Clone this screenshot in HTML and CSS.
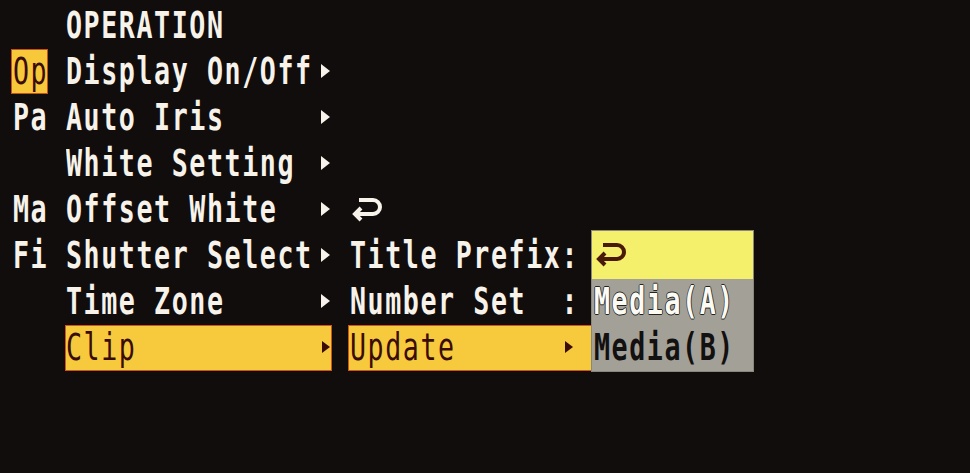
FILE: index.html
```html
<!DOCTYPE html>
<html lang="en">
<head>
  <meta charset="UTF-8" />
  <title>Operation Menu</title>
  <link rel="stylesheet" href="styles.css">
</head>
<body>
  <div class="menu">
    <div class="title"><span class="label">OPERATION</span></div>

    <div class="tab row2"><div class="tab-box active"><span class="label">Op</span></div></div>
    <div class="tab row3"><div class="tab-box"><span class="label">Pa</span></div></div>
    <div class="tab row5"><div class="tab-box"><span class="label">Ma</span></div></div>
    <div class="tab row6"><div class="tab-box"><span class="label">Fi</span></div></div>

    <div class="item row2"><span class="label">Display On/Off</span><i class="arrow"></i></div>
    <div class="item row3"><span class="label">Auto Iris</span><i class="arrow"></i></div>
    <div class="item row4"><span class="label">White Setting</span><i class="arrow"></i></div>
    <div class="item row5"><span class="label">Offset White</span><i class="arrow"></i></div>
    <div class="item row6"><span class="label">Shutter Select</span><i class="arrow"></i></div>
    <div class="item row7"><span class="label">Time Zone</span><i class="arrow"></i></div>
    <div class="item row8 selected"><span class="label">Clip</span><i class="arrow"></i></div>

    <div class="sub row5">
      <svg class="back" width="34" height="26" viewBox="0 0 34 26">
        <path d="M9 4 H23 A7 7 0 0 1 23 18 H5 M11 12 L5 18 L11 24" fill="none" stroke="currentColor" stroke-width="4"/>
      </svg>
    </div>
    <div class="sub row6"><span class="label">Title Prefix:</span></div>
    <div class="sub row7"><span class="label">Number Set  :</span></div>
    <div class="sub row8 selected"><span class="label">Update</span><i class="arrow"></i></div>

    <div class="dropdown">
      <div class="option current">
        <svg class="back" width="34" height="26" viewBox="0 0 34 26">
          <path d="M9 4 H23 A7 7 0 0 1 23 18 H5 M11 12 L5 18 L11 24" fill="none" stroke="currentColor" stroke-width="4"/>
        </svg>
      </div>
      <div class="option light"><span class="label">Media(A)</span></div>
      <div class="option dark"><span class="label">Media(B)</span></div>
    </div>
  </div>
</body>
</html>
```

FILE: styles.css
```css
body {
  margin: 0;
  background: #110d0d;
  color: #f7f3ea;
  font-family: "DejaVu Sans Mono", monospace;
  font-size: 37px;
  font-weight: bold;
  height: 473px;
  overflow: hidden;
}
.menu {
  display: grid;
  grid-template-columns: 54px 267px 16px 244px 161px;
  grid-template-rows: repeat(8, 46px);
  padding: 3px 0 0 11px;
  line-height: 46px;
}
/* panel font is tall and narrow: squeeze a mono face */
.label {
  display: block;
  flex: 1;
  min-width: 0;
  white-space: pre;
  letter-spacing: 2.2px;
  transform: scaleX(0.72);
  transform-origin: left center;
}
.title { grid-row: 1; grid-column: 2; padding-left: 1px; }
.row2 { grid-row: 2; }
.row3 { grid-row: 3; }
.row4 { grid-row: 4; }
.row5 { grid-row: 5; }
.row6 { grid-row: 6; }
.row7 { grid-row: 7; }
.row8 { grid-row: 8; }

.tab { grid-column: 1; }
.tab-box {
  width: 37px;
  height: 45px;
  padding-left: 2px;
  box-sizing: border-box;
}
.tab-box.active {
  background: #f6c83a;
  color: #3a0c08;
  font-weight: normal;
  box-shadow: inset 0 0 0 1px #c8501c;
}

.item, .sub {
  display: flex;
  align-items: center;
}
.item { grid-column: 2; padding: 0 2px 0 1px; }
.sub { grid-column: 4; padding: 0 19px 0 2px; }

.arrow {
  width: 0;
  height: 0;
  border-left: 9px solid currentColor;
  border-top: 7px solid transparent;
  border-bottom: 7px solid transparent;
  margin-top: -3px;
}
.selected {
  background: #f6ca3c;
  color: #3a0c08;
  font-weight: normal;
  box-shadow: inset 0 0 0 1px #d0541c;
}
.selected .arrow { border-left-width: 8px; border-top-width: 6px; border-bottom-width: 6px; }

.back { display: block; margin-top: -2px; }

.dropdown {
  grid-column: 5;
  grid-row: 6 / span 3;
  margin-top: -2px;
  display: flex;
  flex-direction: column;
  background: #a3a097;
  box-shadow: 0 0 0 1px #8a877e;
}
.option {
  height: 46px;
  display: flex;
  align-items: center;
  padding-left: 2px;
}
.option.current {
  height: 48px;
  background: #f4f06c;
  color: #4a1a08;
}
.option.light {
  color: #fbfbf4;
  text-shadow: 1px 0 0 #222, -1px 0 0 #222, 0 1px 0 #222, 0 -1px 0 #222;
}
.option.dark { color: #121010; }
```
